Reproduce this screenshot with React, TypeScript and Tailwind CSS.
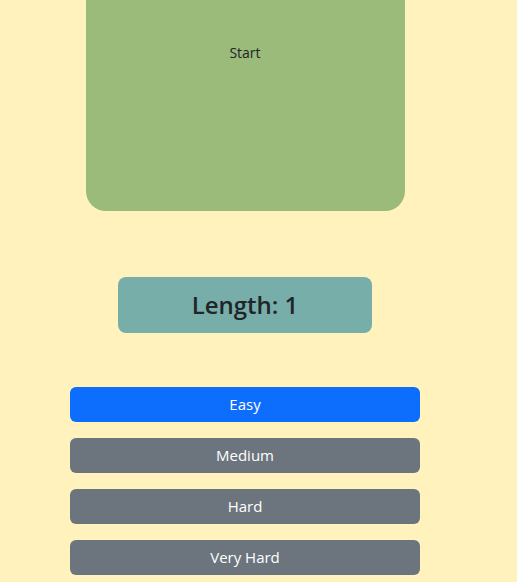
import React from "react";

const levels = ["Easy", "Medium", "Hard", "Very Hard"];

export default function App() {
  const active = "Easy";
  return (
    <main
      className="min-h-screen w-full bg-[#fff2bd]"
      style={{ fontFamily: '"Open Sans", "Noto Sans", sans-serif' }}
    >
      <div className="w-[490px] flex flex-col items-center">
        {/* Board */}
        <div className="w-[319px] h-[211px] bg-[#9bbb7a] rounded-b-[20px] flex justify-center pt-[43px]">
          <span className="text-[14px] leading-[20px] text-[#212529]">Start</span>
        </div>

        {/* Length */}
        <div className="mt-[66px] w-[254px] h-[56px] bg-[#77aeaa] rounded-[8px] flex items-center justify-center">
          <span className="text-[24px] font-semibold text-[#212529]">Length: 1</span>
        </div>

        {/* Difficulty */}
        <div className="mt-[54px] w-[350px] flex flex-col gap-[16px]">
          {levels.map((l) => (
            <button
              key={l}
              className={
                "h-[35px] w-full rounded-[6px] text-[15px] text-white " +
                (l === active ? "bg-[#0d6efd]" : "bg-[#6c757d]")
              }
            >
              {l}
            </button>
          ))}
        </div>
      </div>
    </main>
  );
}
